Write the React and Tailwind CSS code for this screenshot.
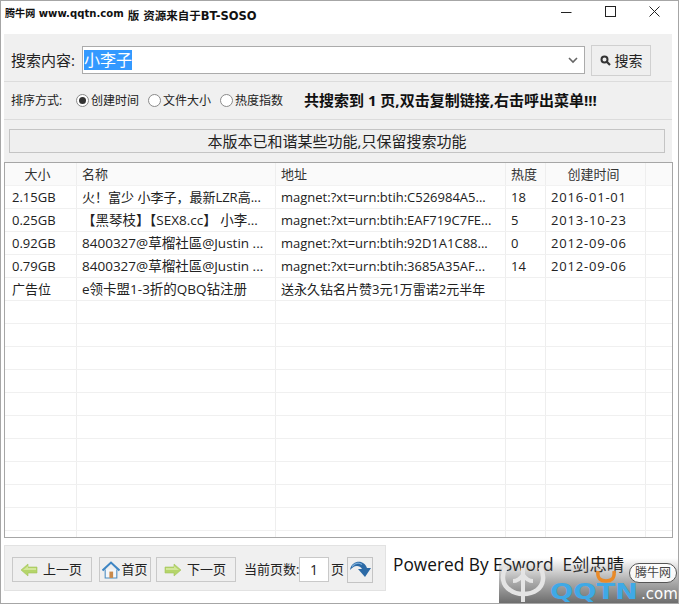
import React from "react";

const rows = [
  ["2.15GB", <span className="text-[13px]">火！富少 小李子，最新LZR高...</span>, "magnet:?xt=urn:btih:C526984A5...", "18", "2016-01-01"],
  ["0.25GB", "【黑琴枝】【SEX8.cc】 小李...", "magnet:?xt=urn:btih:EAF719C7FE...", "5", "2013-10-23"],
  ["0.92GB", "8400327@草榴社區@Justin ...", "magnet:?xt=urn:btih:92D1A1C88...", "0", "2012-09-06"],
  ["0.79GB", "8400327@草榴社區@Justin ...", "magnet:?xt=urn:btih:3685A35AF...", "14", "2012-09-06"],
  ["广告位", "e领卡盟1-3折的QBQ钻注册", "送永久钻名片赞3元1万雷诺2元半年", "", ""],
];
const empty = Array.from({ length: 11 }, () => ["", "", "", "", ""]);
const cols = [
  "w-[72px] pl-[7px]",
  "w-[199px] pl-[5px] text-[13.5px]",
  "w-[230px] pl-[5px]",
  "w-[40px] pl-[5px]",
  "w-[100px] pl-[5px] tracking-[0.8px]",
];
const headCols = [
  "w-[72px] text-center pr-[6px]",
  "w-[199px] pl-[5px]",
  "w-[230px] pl-[5px]",
  "w-[40px] pl-[5px]",
  "w-[100px] text-center pr-[4px]",
];

function Arrow({ flip }) {
  return (
    <svg width="18" height="14" viewBox="0 0 18 14" style={flip ? { transform: "scaleX(-1)" } : undefined}>
      <path d="M1 7 L8 1 L8 4 L17 4 L17 10 L8 10 L8 13 Z" fill="#b5d56a" stroke="#a3c45a" strokeWidth="0.6" />
      <path d="M3 7 L8 3 L8 5 L16 5 L16 7 Z" fill="#d3e79b" />
    </svg>
  );
}

function Row({ cells, head }) {
  const c = head ? headCols : cols;
  return (
    <div className={`flex shrink-0 h-[23px] border-b ${head ? "border-[#f2f2f2] bg-[#fafafa] text-[#333]" : "border-[#f0f0f0]"}`}>
      {c.map((cl, i) => (
        <div key={i} className={`${cl} shrink-0 border-r border-[#eeeeee] whitespace-nowrap overflow-hidden leading-[22px]`}>
          {cells[i]}
        </div>
      ))}
      <div className="flex-1" />
    </div>
  );
}

export default function App() {
  return (
    <div className="relative w-[679px] h-[604px] overflow-hidden bg-white border border-[#a6a6a6] text-[13px] text-[#222] font-['Open_Sans','Noto_Sans_CJK_SC',sans-serif] flex flex-col">
      <div className="h-[33px] shrink-0 flex items-start justify-between pl-[4px] pr-[18px]">
        <div className="flex items-start font-bold text-[#111] whitespace-nowrap font-['DejaVu_Sans','Noto_Sans_CJK_SC',sans-serif]">
          <span className="text-[10.1px] mt-[5px]">腾牛网 www.qqtn.com</span>
          <span className="ml-[4px] mt-[7px] text-[11.5px]">版 资源来自于BT-SOSO</span>
        </div>
        <div className="flex items-center gap-[33px] mt-[5px] text-[#222]">
          <svg width="11" height="11" viewBox="0 0 11 11"><path d="M0 6.5H10.5" stroke="#222" strokeWidth="1" /></svg>
          <svg width="11" height="11" viewBox="0 0 11 11"><rect x="0.5" y="0.5" width="10" height="10" fill="none" stroke="#222" /></svg>
          <svg width="11" height="11" viewBox="0 0 11 11"><path d="M0.5 0.5L10.5 10.5M10.5 0.5L0.5 10.5" stroke="#222" /></svg>
        </div>
      </div>

      <div className="ml-[3px] w-[668px] shrink-0 flex flex-col">
        <div className="h-[48px] bg-[#f0f0f0] border-b border-[#dcdcdc] flex items-center pl-[7px] pt-[5px]">
          <span className="text-[15px] w-[71px] whitespace-nowrap">搜索内容:</span>
          <div className="w-[503px] h-[28px] bg-white border border-[#ababab] flex items-center justify-between pl-[1px] pr-[6px]">
            <span className="bg-[#3399ff] text-white text-[16px] leading-[20px] h-[20px]">小李子</span>
            <svg width="10" height="7" viewBox="0 0 10 7"><path d="M1 1L5 5L9 1" fill="none" stroke="#666" strokeWidth="1.6" /></svg>
          </div>
          <div className="ml-[6px] w-[60px] h-[31px] bg-[#efefef] border border-[#d0d0d0] flex items-center justify-center gap-[4px]">
            <svg width="11" height="11" viewBox="0 0 11 11"><circle cx="4.5" cy="4.5" r="3" fill="none" stroke="#333" strokeWidth="2" /><path d="M6.8 6.8L10 10" stroke="#333" strokeWidth="2.2" /></svg>
            <span className="text-[14px]">搜索</span>
          </div>
        </div>
        <div className="h-[38px] bg-[#f0f0f0] border-b border-[#dcdcdc] flex items-center pl-[7px]">
          <span className="text-[12px] w-[65px] whitespace-nowrap">排序方式:</span>
          <div className="w-[72px] flex items-center gap-[2px] text-[12px] whitespace-nowrap">
            <span className="w-[13px] h-[13px] rounded-full border border-[#8a8a8a] bg-white flex items-center justify-center"><span className="w-[7px] h-[7px] rounded-full bg-[#333]" /></span>
            创建时间
          </div>
          <div className="w-[72px] flex items-center gap-[2px] text-[12px] whitespace-nowrap">
            <span className="w-[13px] h-[13px] rounded-full border border-[#8a8a8a] bg-white" />
            文件大小
          </div>
          <div className="w-[84px] flex items-center gap-[2px] text-[12px] whitespace-nowrap">
            <span className="w-[13px] h-[13px] rounded-full border border-[#8a8a8a] bg-white" />
            热度指数
          </div>
          <span className="text-[15px] font-bold text-[#111] whitespace-nowrap">共搜索到 1 页,双击复制链接,右击呼出菜单!!!</span>
        </div>
        <div className="h-[42px] bg-[#f0f0f0] px-[5px] pt-[9px]">
          <div className="w-[656px] h-[24px] bg-[#efefef] border border-[#c4c4c4] flex items-center justify-center text-[15px] whitespace-nowrap">
            本版本已和谐某些功能,只保留搜索功能
          </div>
        </div>
      </div>

      <div className="ml-[3px] w-[669px] h-[376px] shrink-0 bg-white border border-[#a6a6a6] overflow-hidden flex flex-col text-[13px]">
        <Row cells={["大小", "名称", "地址", "热度", "创建时间"]} head />
        {rows.map((r, i) => <Row key={i} cells={r} />)}
        {empty.map((r, i) => <Row key={i} cells={r} />)}
      </div>

      <div className="ml-[3px] mt-[7px] flex items-start">
        <div className="w-[382px] h-[46px] bg-[#f0f0f0] border border-[#e2e2e2] flex items-center pl-[7px] pt-[3px] text-[13px]">
          <div className="w-[80px] h-[25px] bg-[#efefef] border border-[#c9c9c9] flex items-center justify-center gap-[5px] pr-[2px]"><Arrow /><span>上一页</span></div>
          <div className="ml-[7px] w-[52px] h-[25px] bg-[#efefef] border border-[#c9c9c9] flex items-center justify-center gap-[1px]">
            <svg width="18" height="18" viewBox="0 0 17 17">
              <path d="M3 8V16H14V8" fill="#f4f7fa" stroke="#4a8cc0" />
              <path d="M0.5 9L8.5 1.5L16.5 9" fill="none" stroke="#3f86c4" strokeWidth="2" />
              <rect x="7" y="10" width="3.5" height="6" fill="#c98a4b" />
            </svg>
            <span>首页</span>
          </div>
          <div className="ml-[5px] w-[80px] h-[25px] bg-[#efefef] border border-[#c9c9c9] flex items-center justify-center gap-[5px] pr-[2px]"><Arrow flip /><span>下一页</span></div>
          <span className="ml-[8px] whitespace-nowrap w-[55px] text-[13px]">当前页数:</span>
          <div className="w-[30px] h-[25px] bg-white border border-[#c9c9c9] flex items-center justify-center text-[14px]">1</div>
          <span className="ml-[2px] w-[16px]">页</span>
          <div className="w-[26px] h-[26px] bg-[#efefef] border border-[#c4c4c4] flex items-center justify-center">
            <svg width="23" height="20" viewBox="0 0 23 20">
              <path d="M1 10C2 3 8 1 12 2C15 3 17 5 18 8L22 8L16 17L9 9L13 9C12 7 10 6 8 6C5 6 3 8 1 10Z" fill="#2c6aa6" />
              <path d="M3 6.5C6 3 10 2.5 13 4.5" fill="none" stroke="#7fb0dc" strokeWidth="1.3" />
            </svg>
          </div>
        </div>
        <span className="ml-[7px] mt-[7px] text-[17.3px] leading-[26px] text-[#111] whitespace-nowrap">Powered By ESword&nbsp; E剑忠晴</span>
      </div>

      <div className="absolute right-[-1px] bottom-[-1px] w-[180px] h-[46px] bg-gradient-to-b from-[rgba(120,120,120,0)] via-[rgba(120,120,120,0.6)] to-[#6a6a6a]" />
      <svg className="absolute left-[499px] top-[562px]" width="46" height="40" viewBox="0 0 46 40">
        <path d="M6 4C1 12 2 22 10 27C14 30 18 31 23 31C28 31 33 30 37 27C44 22 45 12 40 4" fill="none" stroke="#e4e4e4" strokeWidth="4.5" />
        <path d="M23 5V39M13 18C17 18 20 16 23 12C26 16 29 18 33 18" fill="none" stroke="#e4e4e4" strokeWidth="4" />
      </svg>
      <svg className="absolute left-[594px] top-[569px]" width="22" height="14" viewBox="0 0 22 14"><path d="M3 1C2 9 6 11 11 11C16 11 20 9 19 1" fill="none" stroke="#e98a28" strokeWidth="3.5" /></svg>
      <div className="absolute left-[628px] top-[562px] w-[48px] h-[20px] rounded-full bg-white/90 border border-[#555] flex items-center justify-center text-[12px] text-[#444] whitespace-nowrap">腾牛网</div>
      <div className="absolute left-[549px] top-[579px] flex items-baseline whitespace-nowrap leading-[24px] font-['DejaVu_Sans',sans-serif]">
        <span className="w-[91px] inline-block origin-left scale-x-[1.3] text-[21px] font-bold text-[#3fa9e6]">QQTN</span>
        <span className="text-[15px] text-white">.com</span>
      </div>
    </div>
  );
}
